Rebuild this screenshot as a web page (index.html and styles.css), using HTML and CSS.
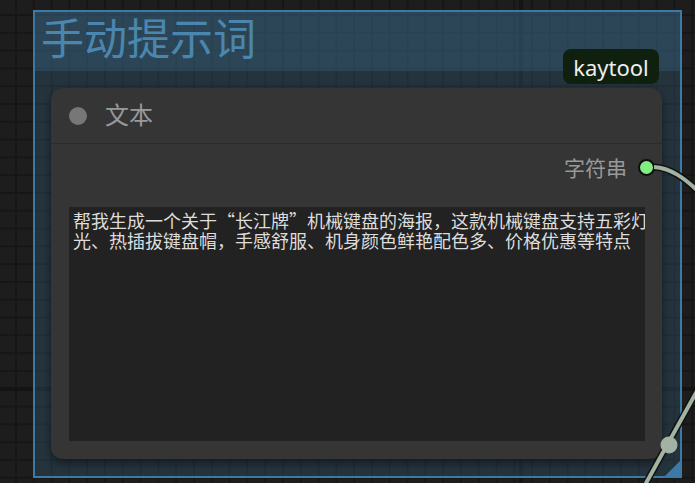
FILE: index.html
```html
<!DOCTYPE html>
<html lang="zh-CN">

<head>
    <meta charset="UTF-8">
    <meta name="viewport" content="width=device-width, initial-scale=1.0">
    <title>手动提示词</title>
    <link rel="stylesheet" href="styles.css">
</head>

<body>
    <div class="group">
        <div class="group-header">
            <h1 class="group-title">手动提示词</h1>
        </div>
        <div class="group-body">
            <div class="node">
                <div class="node-badge">kaytool</div>
                <div class="node-title">
                    <span class="node-dot"></span>
                    <span class="node-name">文本</span>
                </div>
                <div class="node-output">
                    <span class="output-label">字符串</span>
                    <span class="output-slot"></span>
                </div>
                <textarea class="prompt-box" wrap="off" spellcheck="false">帮我生成一个关于“长江牌”机械键盘的海报，这款机械键盘支持五彩灯
光、热插拔键盘帽，手感舒服、机身颜色鲜艳配色多、价格优惠等特点</textarea>
            </div>
        </div>
    </div>

    <svg class="links" width="695" height="483" viewBox="0 0 695 483">
        <path class="link-shadow" d="M 654 167 C 670 168, 684 177, 702 195" />
        <path class="link" d="M 654 167 C 670 168, 684 177, 702 195" />
        <path class="link-shadow" d="M 702 382 Q 672 436, 640 494" />
        <path class="link" d="M 702 382 Q 672 436, 640 494" />
        <circle class="link-center" cx="669" cy="445" r="8.5" />
    </svg>
</body>

</html>
```

FILE: styles.css
```css
* {
    margin: 0;
    padding: 0;
    box-sizing: border-box;
}

body {
    width: 695px;
    height: 483px;
    overflow: hidden;
    position: relative;
    font-family: "Noto Sans CJK SC", "Noto Sans", sans-serif;
    background-color: #1d1d1d;
    background-image:
        linear-gradient(90deg, #141414 4px, transparent 4px),
        linear-gradient(#141414 4px, transparent 4px),
        linear-gradient(90deg, #161616 2px, transparent 2px),
        linear-gradient(#161616 2px, transparent 2px);
    background-size: 800px 100%, 100% 600px, 17.8px 100%, 100% 17.8px;
    background-position: 519px 0, 0 387px, 15px 0, 0 14px;
}

.group {
    position: relative;
    margin: 10px 0 0 33px;
    width: 649px;
    height: 468px;
    border: 2px solid #3d79a5;
    display: flex;
    flex-direction: column;
}

.group::after {
    content: "";
    position: absolute;
    right: 0;
    bottom: 0;
    border-style: solid;
    border-width: 0 0 15px 15px;
    border-color: transparent transparent #3d79a5 transparent;
}

.group-header {
    height: 59px;
    padding: 3px 0 0 6px;
    background-color: rgba(63, 120, 158, 0.46);
}

.group-title {
    font-size: 43px;
    font-weight: normal;
    line-height: 1;
    color: #4a86ad;
}

.group-body {
    flex: 1;
    padding: 17px 18px 0 16px;
    background-color: rgba(63, 120, 158, 0.25);
}

.node {
    position: relative;
    height: 371px;
    background-color: #353535;
    border-radius: 12px;
    box-shadow: 0 4px 10px rgba(0, 0, 0, 0.45);
    display: flex;
    flex-direction: column;
}

.node-badge {
    position: absolute;
    right: 3px;
    bottom: calc(100% + 4px);
    width: 96px;
    height: 35px;
    border-radius: 8px;
    background-color: #10200f;
    color: #eeeeee;
    font-family: "Noto Sans", sans-serif;
    font-size: 22px;
    display: flex;
    align-items: center;
    justify-content: center;
}

.node-title {
    height: 56px;
    padding-left: 18px;
    display: flex;
    align-items: center;
    gap: 18px;
    border-bottom: 1px solid #2b2b2b;
}

.node-dot {
    flex-shrink: 0;
    width: 18px;
    height: 18px;
    border-radius: 50%;
    background-color: #777;
}

.node-name {
    font-size: 24px;
    line-height: 1;
    padding-bottom: 3px;
    color: #999;
}

.node-output {
    height: 46px;
    padding-right: 7px;
    display: flex;
    align-items: center;
    justify-content: flex-end;
    gap: 11px;
}

.output-label {
    font-size: 21px;
    color: #999;
}

.output-slot {
    flex-shrink: 0;
    width: 17px;
    height: 17px;
    border-radius: 50%;
    background-color: #7ff07f;
    border: 2px solid #0d0d0d;
}

.prompt-box {
    margin: 17px 17px 0 18px;
    height: 234px;
    padding: 3px 4px;
    border: none;
    outline: none;
    resize: none;
    overflow: hidden;
    background-color: #222;
    color: #dddddd;
    font-family: "Noto Sans CJK SC", sans-serif;
    font-size: 18px;
    line-height: 20px;
}

.links {
    position: absolute;
    left: 0;
    top: 0;
    pointer-events: none;
}

.link-shadow {
    fill: none;
    stroke: #111;
    stroke-width: 7;
}

.link {
    fill: none;
    stroke: #a3b3a3;
    stroke-width: 4;
}

.link-center {
    fill: #a3b3a3;
}
```
